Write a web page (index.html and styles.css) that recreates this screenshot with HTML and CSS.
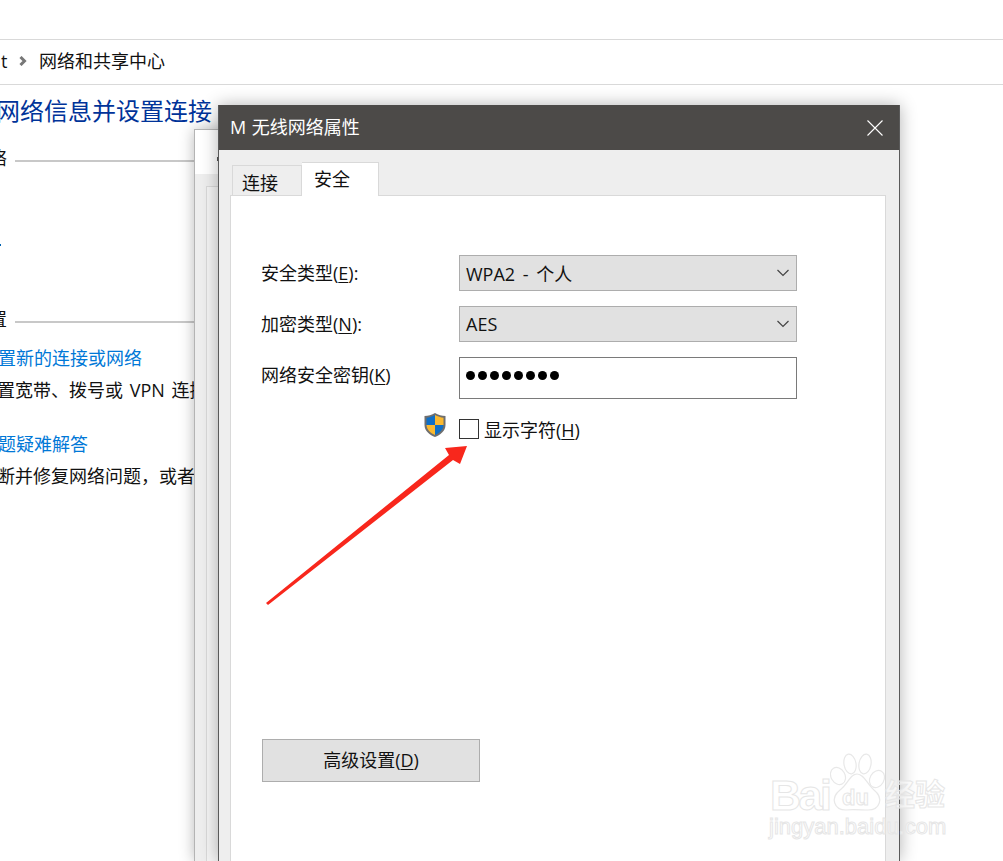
FILE: index.html
```html
<!DOCTYPE html>
<html lang="zh-CN">
	<head>
		<meta charset="UTF-8" />
		<meta name="viewport" content="width=device-width, initial-scale=1.0" />
		<title>M 无线网络属性</title>
		<link rel="stylesheet" href="styles.css">
	</head>
	<body>
		<div class="page">
			<div class="crumbs">
				<span class="crumb-cut">t</span>
				<svg class="crumb-sep" width="8" height="10" viewBox="0 0 8 10"><path d="M1.500 1 L5.500 5 L1.500 9" fill="none" stroke="#777" stroke-width="3" /></svg>
				<span>网络和共享中心</span>
			</div>
			<h1 class="page-title">网络信息并设置连接</h1>
			<div class="group-head first"><span>络</span><i></i></div>
			<i class="edge-mark"></i>
			<div class="group-head second"><span>置</span><i></i></div>
			<a class="task-link">置新的连接或网络</a>
			<p class="task-text">置宽带、拨号或 VPN 连接</p>
			<a class="task-link next">题疑难解答</a>
			<p class="task-text">断并修复网络问题，或者</p>
		</div>

		<div class="back-window">
			<div class="back-head"><i class="back-mark"></i></div>
			<div class="back-body"><div class="back-panel"></div></div>
		</div>

		<div class="dialog">
			<div class="titlebar">
				<span class="title-text">M 无线网络属性</span>
				<svg width="16" height="16" viewBox="0 0 16 16"><path d="M0.500 0.500 L15.500 15.500 M15.500 0.500 L0.500 15.500" stroke="#fff" stroke-width="1.100" /></svg>
			</div>
			<div class="dialog-body">
				<div class="tabs">
					<div class="tab">连接</div>
					<div class="tab active">安全</div>
				</div>
				<div class="panel">
					<div class="row">
						<label>安全类型(<u>E</u>):</label>
						<div class="select">
							<span>WPA2 - 个人</span>
							<svg width="12" height="8" viewBox="0 0 12 8"><path d="M0.500 1 L6 6.500 L11.500 1" fill="none" stroke="#444" stroke-width="1.200" /></svg>
						</div>
					</div>
					<div class="row">
						<label>加密类型(<u>N</u>):</label>
						<div class="select">
							<span>AES</span>
							<svg width="12" height="8" viewBox="0 0 12 8"><path d="M0.500 1 L6 6.500 L11.500 1" fill="none" stroke="#444" stroke-width="1.200" /></svg>
						</div>
					</div>
					<div class="row">
						<label class="key-label">网络安全密钥(<u>K</u>)</label>
						<div class="password">
							<i></i><i></i><i></i><i></i><i></i><i></i><i></i><i></i>
						</div>
					</div>
					<div class="show-row">
						<svg class="shield" width="24" height="26" viewBox="0 0 24 26">
							<path d="M12 1 C9 3 5 4 1.500 4 L1.500 13 C1.500 19 7 23 12 25 C17 23 22.500 19 22.500 13 L22.500 4 C19 4 15 3 12 1 Z" fill="#6f6f6f" />
							<path d="M12 3 C9.500 4.500 6 5.500 3.500 5.700 L3.500 13 L12 13 Z" fill="#0f6fc6" />
							<path d="M12 3 C14.500 4.500 18 5.500 20.500 5.700 L20.500 13 L12 13 Z" fill="#fbb92f" />
							<path d="M3.500 13 C3.800 18 8 21.300 12 23 L12 13 Z" fill="#fbb92f" />
							<path d="M20.500 13 C20.200 18 16 21.300 12 23 L12 13 Z" fill="#0f6fc6" />
						</svg>
						<span class="checkbox"></span>
						<span>显示字符(<u>H</u>)</span>
					</div>
					<button class="advanced" type="button">高级设置(<u>D</u>)</button>
				</div>
			</div>
		</div>

		<svg class="arrow" width="1003" height="861" viewBox="0 0 1003 861">
			<polygon points="266,603 449,455 445,448 467,446 460,464 453,460 268,605" fill="#f8271c" />
		</svg>

		<div class="watermark">
			<svg class="paw" width="56" height="62" viewBox="0 0 56 62">
				<g fill="rgba(255,255,255,0.5)" stroke="#e8e8e8" stroke-width="1.200">
					<ellipse cx="8" cy="24" rx="7" ry="9" transform="rotate(-30 8 24)" />
					<ellipse cx="20" cy="12" rx="6" ry="10" transform="rotate(-10 20 12)" />
					<ellipse cx="35" cy="12" rx="6" ry="10" transform="rotate(10 35 12)" />
					<ellipse cx="47" cy="27" rx="7" ry="9" transform="rotate(30 47 27)" />
					<path d="M27 22 C34 22 37 32 44 38 C54 46 50 58 38 58 C32 58 22 57 16 58 C4 58 0 46 10 38 C18 32 20 22 27 22 Z" />
				</g>
			</svg>
			<span class="wm-bai">Bai</span>
			<span class="wm-du">du</span>
			<span class="wm-jy">经验</span>
			<span class="wm-url">jingyan.baidu.com</span>
		</div>
	</body>
</html>
```

FILE: styles.css
```css
* {
	box-sizing: border-box;
}
html,
body {
	margin: 0;
	padding: 0;
}
body {
	position: relative;
	width: 1003px;
	height: 861px;
	overflow: hidden;
	background-color: #fff;
	color: #111;
	font-family: "Open Sans", "Noto Sans CJK SC", sans-serif;
	font-size: 18px;
}
u {
	text-underline-offset: 2px;
}

/* page behind the dialogs */
.page {
	height: 861px;
	padding-top: 39px;
}
.crumbs {
	display: flex;
	align-items: center;
	height: 46px;
	padding-bottom: 2px;
	border-top: 1px solid #d9d9d9;
	border-bottom: 1px solid #d9d9d9;
	line-height: 42px;
}
.crumb-cut {
	width: 18px;
	margin-left: 1px;
}
.crumb-sep {
	margin-right: 12px;
}
.page-title {
	margin: 8px 0 0 -4px;
	color: #003399;
	font-size: 24px;
	font-weight: 400;
	line-height: 36px;
	white-space: nowrap;
}
.group-head {
	display: flex;
	align-items: center;
	width: 220px;
	line-height: 26px;
}
.group-head span {
	width: 26px;
	margin-left: -11px;
}
.group-head i {
	flex: 1;
	height: 2px;
	margin-top: 6px;
	background-color: #c8c8c8;
}
.group-head.first {
	margin-top: 16px;
}
.group-head.second {
	margin-top: 135px;
}
.edge-mark {
	position: absolute;
	left: 0;
	top: 244px;
	width: 1px;
	height: 2px;
	background-color: #0063b1;
}
.task-link {
	display: block;
	margin: 13px 0 0 -2px;
	color: #0078d7;
	line-height: 26px;
	white-space: nowrap;
}
.task-link.next {
	margin-top: 28px;
}
.task-text {
	margin: 6px 0 0 -3px;
	line-height: 26px;
	white-space: nowrap;
	word-spacing: 2px;
}

/* windows */
.back-window {
	position: absolute;
	left: 194px;
	top: 129px;
	width: 120px;
	height: 732px;
	border: 1px solid #b4b4b4;
	border-bottom: 0;
	background-color: #fff;
	box-shadow: 0 0 14px rgba(0, 0, 0, 0.28);
}
.back-head {
	height: 44px;
}
.back-mark {
	position: absolute;
	left: 22px;
	top: 27px;
	width: 2px;
	height: 4px;
	background-color: #555;
}
.back-body {
	height: 688px;
	padding: 12px 0 0 11px;
	background-color: #eee;
}
.back-panel {
	height: 100%;
	border: 1px solid #d9d9d9;
	border-bottom: 0;
	background-color: #f4f4f4;
}
.dialog {
	position: absolute;
	left: 218px;
	top: 105px;
	width: 682px;
	height: 756px;
	border-left: 1px solid #5a5a5a;
	border-right: 1px solid #5a5a5a;
	background-color: #eee;
	box-shadow: 0 0 16px rgba(0, 0, 0, 0.3);
}
.titlebar {
	display: flex;
	align-items: center;
	justify-content: space-between;
	height: 45px;
	padding: 0 16px 0 11px;
	background-color: #4c4a48;
	color: #fff;
}
.title-text {
	margin-bottom: 4px;
	word-spacing: 1px;
}
.dialog-body {
	padding: 12px 13px 0 11px;
}
.tabs {
	display: flex;
	align-items: flex-end;
	height: 33px;
	padding-left: 2px;
}
.tab {
	width: 70px;
	height: 30px;
	padding-left: 9px;
	border: 1px solid #d9d9d9;
	border-bottom: 0;
	line-height: 34px;
}
.tab.active {
	position: relative;
	z-index: 1;
	width: 77px;
	height: 34px;
	margin-bottom: -1px;
	padding-left: 12px;
	border-left: 0;
	background-color: #fff;
	line-height: 32px;
}
.panel {
	height: 666px;
	padding: 59px 0 0 30px;
	border: 1px solid #d9d9d9;
	border-bottom: 0;
	background-color: #fff;
}
.row {
	display: flex;
	align-items: center;
	margin-bottom: 15px;
}
.row label {
	width: 198px;
	margin-bottom: 2px;
}
.row .key-label {
	margin-bottom: 8px;
}
.select {
	display: flex;
	align-items: center;
	justify-content: space-between;
	width: 338px;
	height: 36px;
	padding: 0 7px 1px 6px;
	border: 1px solid #adadad;
	background-color: #e1e1e1;
	word-spacing: 3px;
}
.password {
	display: flex;
	align-items: center;
	gap: 3px;
	width: 338px;
	height: 42px;
	padding: 0 0 6px 6px;
	border: 1px solid #7a7a7a;
}
.password i {
	width: 9px;
	height: 9px;
	border-radius: 50%;
	background-color: #000;
}
.show-row {
	display: flex;
	align-items: center;
	height: 42px;
	margin: -6px 0 0 162px;
}
.shield {
	margin: -8px 12px 0 0;
}
.checkbox {
	width: 20px;
	height: 20px;
	margin-right: 5px;
	border: 1px solid #333;
}
.advanced {
	display: block;
	width: 218px;
	height: 43px;
	margin: 289px 0 0 1px;
	padding: 0 0 3px;
	border: 1px solid #adadad;
	background-color: #e1e1e1;
	color: #111;
	font: inherit;
}

/* overlays */
.arrow {
	position: absolute;
	left: 0;
	top: 0;
}
.watermark {
	position: absolute;
	left: 770px;
	top: 752px;
	width: 190px;
	height: 90px;
	color: rgba(255, 255, 255, 0.5);
	-webkit-text-stroke: 1px #e6e6e6;
	font-family: "Liberation Sans", "Noto Sans CJK SC", sans-serif;
	font-weight: 700;
}
.paw {
	position: absolute;
	left: 60px;
	top: 0;
}
.wm-bai,
.wm-du,
.wm-jy,
.wm-url {
	position: absolute;
	white-space: nowrap;
}
.wm-bai {
	left: 0;
	top: 19px;
	font-size: 43px;
	letter-spacing: -2.500px;
}
.wm-du {
	left: 72px;
	top: 33px;
	font-size: 22px;
}
.wm-jy {
	left: 115px;
	top: 28px;
	font-size: 30px;
	line-height: 30px;
}
.wm-url {
	left: -1px;
	top: 62px;
	font-size: 22px;
	font-weight: 400;
}
```
